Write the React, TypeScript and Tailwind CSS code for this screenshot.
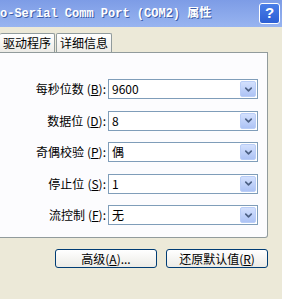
import { ChevronDown } from "lucide-react";

const rows = [
  { label: "每秒位数", key: "B", value: "9600" },
  { label: "数据位", key: "D", value: "8" },
  { label: "奇偶校验", key: "P", value: "偶" },
  { label: "停止位", key: "S", value: "1" },
  { label: "流控制", key: "F", value: "无" },
];

const cjk = "font-['Tahoma','Noto_Sans_CJK_SC',sans-serif]";

// Combo box row with label on the left
const Row = ({ label, hotkey, value }: { label: string; hotkey: string; value: string }) => (
  <div className="flex items-center h-[20px]">
    <div className={`w-[108px] pr-[2px] text-right text-[12px] leading-none text-black whitespace-nowrap ${cjk}`}>
      {label}
      <span className="ml-[3px]">
        (<span className="underline">{hotkey}</span>):
      </span>
    </div>
    <div className="flex items-center w-[150px] h-[20px] border border-[#7f9db9] bg-white pl-[3px] pr-[1px]">
      <span className={`flex-1 text-[12px] leading-none text-black ${cjk}`}>{value}</span>
      <div className="flex items-center justify-center w-[16px] h-[16px] rounded-[2px] border border-[#b9cdf7] bg-gradient-to-b from-[#d3e0fd] to-[#adc3f5]">
        <ChevronDown size={11} strokeWidth={3.5} className="text-[#4d6185]" />
      </div>
    </div>
  </div>
);

const XpButton = ({ children, width }: { children: React.ReactNode; width: string }) => (
  <button
    className={`${width} h-[19px] rounded-[3px] border border-[#003c74] bg-gradient-to-b from-white to-[#ecebe6] text-[12px] leading-none text-black ${cjk}`}
  >
    {children}
  </button>
);

export default function App() {
  return (
    <div className="w-[282px] h-[299px] overflow-hidden bg-[#ece9d8] flex flex-col">
      {/* Title bar */}
      <div className="h-[27px] shrink-0 flex items-center justify-between bg-gradient-to-b from-[#7d9ce6] to-[#98b4f0] pr-[2px]">
        <span className="whitespace-nowrap font-['Liberation_Mono','Noto_Sans_CJK_SC',monospace] font-bold text-[12px] text-white [text-shadow:1px_1px_0_#3d5ea8]">
          o-Serial Comm Port (COM2) 属性
        </span>
        <div className="flex items-center justify-center w-[21px] h-[21px] rounded-[3px] border border-white bg-gradient-to-b from-[#4a7ee8] to-[#2c5fd4] text-white font-bold text-[15px] font-['Liberation_Sans',sans-serif]">
          ?
        </div>
      </div>

      {/* Tabs */}
      <div className="flex items-end h-[25px] pt-[6px]">
        <div className={`flex items-center h-[19px] px-[3px] border border-b-0 border-l-0 border-[#919b9c] rounded-t-[2px] bg-gradient-to-b from-white to-[#ecebe6] text-[12px] leading-none ${cjk}`}>
          驱动程序
        </div>
        <div className={`flex items-center h-[19px] ml-[1px] px-[3px] border border-b-0 border-[#919b9c] rounded-t-[2px] bg-gradient-to-b from-white to-[#ecebe6] text-[12px] leading-none ${cjk}`}>
          详细信息
        </div>
      </div>

      {/* Tab panel */}
      <div className="w-[268px] h-[186px] shrink-0 border border-l-0 border-[#919b9c] rounded-br-[3px] bg-[#fcfcfe] pt-[26px] flex flex-col gap-[11.5px]">
        {rows.map((r) => (
          <Row key={r.key} label={r.label} hotkey={r.key} value={r.value} />
        ))}
      </div>

      {/* Buttons */}
      <div className="flex gap-[9px] pl-[55px] pt-[11px]">
        <XpButton width="w-[102px]">
          高级(<span className="underline">A</span>)...
        </XpButton>
        <XpButton width="w-[102px]">
          还原默认值(<span className="underline">R</span>)
        </XpButton>
      </div>
    </div>
  );
}
